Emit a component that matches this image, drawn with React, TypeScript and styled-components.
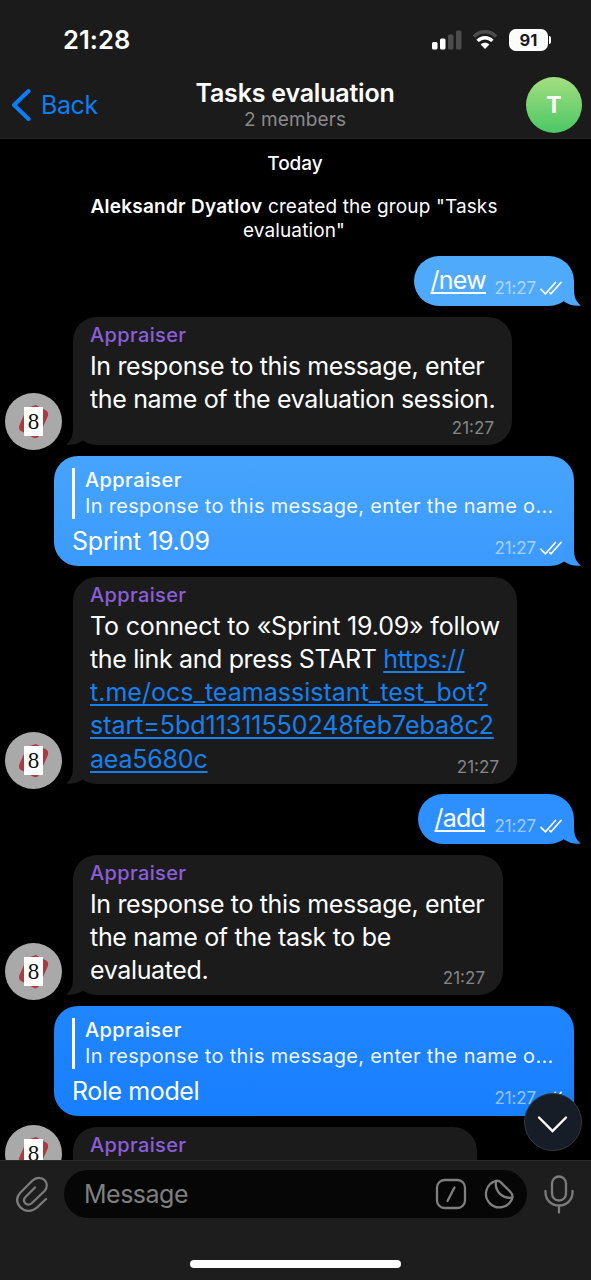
import React from 'react';
import styled, { createGlobalStyle } from 'styled-components';

const GlobalStyle = createGlobalStyle`
  * { box-sizing: border-box; }
  body {
    margin: 0;
    background: #000;
    font-family: Inter, "Liberation Sans", sans-serif;
    color: #fff;
    -webkit-font-smoothing: antialiased;
  }
`;

const Screen = styled.main`
  width: 591px;
  height: 1280px;
  display: flex;
  flex-direction: column;
  overflow: hidden;
  background: #000;
`;

const Header = styled.header`
  flex: none;
  height: 139px;
  background: #1b1b1b;
  border-bottom: 1px solid #262626;
`;

const StatusBar = styled.div`
  height: 77px;
  padding: 2px 40px 0 63px;
  display: flex;
  align-items: center;
  justify-content: space-between;
`;

const Clock = styled.span`
  font-size: 25.5px;
  font-weight: 600;
  letter-spacing: 0.1px;
`;

const StatusIcons = styled.div`
  display: flex;
  align-items: center;
  svg { display: block; }
`;

const WifiIcon = styled.svg`
  margin-left: 10px;
`;

const Battery = styled.div`
  display: flex;
  align-items: center;
  margin-left: 11px;
`;

const BatteryLevel = styled.span`
  width: 39px;
  height: 22px;
  border-radius: 7px;
  background: #fff;
  color: #1b1b1b;
  font-size: 16.5px;
  line-height: 22px;
  font-weight: 700;
  text-align: center;
`;

const BatteryTip = styled.span`
  width: 2px;
  height: 8px;
  margin-left: 1px;
  border-radius: 0 3px 3px 0;
  background: #fff;
`;

const NavBar = styled.nav`
  height: 61px;
  display: grid;
  grid-template-columns: 150px 1fr 150px;
  padding: 0 9px 0 11px;
`;

const BackButton = styled.div`
  display: flex;
  align-items: center;
  gap: 10px;
  height: 56px;
  color: #0a80f8;
  font-size: 25px;
  letter-spacing: -0.4px;
`;

const TitleBlock = styled.div`
  text-align: center;
  padding: 1px 3px 0 0;
`;

const Title = styled.div`
  font-size: 25px;
  line-height: 30px;
  font-weight: 600;
  letter-spacing: -0.2px;
  white-space: nowrap;
`;

const Subtitle = styled.div`
  font-size: 19px;
  line-height: 24px;
  letter-spacing: 0.1px;
  color: #8a8a8c;
`;

const GroupAvatar = styled.div`
  justify-self: end;
  width: 56px;
  height: 56px;
  border-radius: 50%;
  background: linear-gradient(#a3df80, #4cc764);
  font-size: 23px;
  line-height: 57px;
  font-weight: 700;
  text-align: center;
`;

const Conversation = styled.section`
  flex: 1;
  min-height: 0;
  overflow: hidden;
  display: flex;
  flex-direction: column;
`;

const DayLabel = styled.div`
  flex: none;
  height: 49px;
  padding-right: 1px;
  line-height: 50px;
  text-align: center;
  font-size: 19px;
  font-weight: 500;
`;

const ServiceNote = styled.p`
  flex: none;
  width: 588px;
  height: 61px;
  margin: 7px 0 0;
  font-size: 19px;
  line-height: 24px;
  letter-spacing: 0.13px;
  text-align: center;
  b {
    font-weight: 600;
    letter-spacing: 0.25px;
  }
`;

const Feed = styled.div`
  flex: none;
  display: flex;
  flex-direction: column;
  gap: 10.5px;
`;

const IncomingRow = styled.div`
  display: flex;
  align-items: flex-end;
  gap: 11px;
  padding-left: 5px;
`;

const OutgoingRow = styled.div`
  display: flex;
  justify-content: flex-end;
  padding-right: 17px;
`;

const BotAvatar = styled.div<{ $pinned?: boolean }>`
  flex: none;
  width: 57px;
  height: 57px;
  margin-bottom: -5px;
  border-radius: 50%;
  background: #a9a9a9;
  overflow: hidden;
  align-self: ${p => (p.$pinned ? 'flex-start' : 'flex-end')};
  margin-top: ${p => (p.$pinned ? '-1.5px' : '0')};
  svg { display: block; }
`;

const IncomingBubble = styled.div<{ $width: number; $height: number }>`
  position: relative;
  display: grid;
  grid-template-columns: minmax(0, 1fr);
  width: ${p => p.$width}px;
  height: ${p => p.$height}px;
  padding: 5px 18px 6px 17px;
  border-radius: 24px;
  background: #1b1b1b;
`;

const Tail = styled.svg<{ $side: 'left' | 'right' }>`
  position: absolute;
  bottom: 0;
  width: 21px;
  height: 24px;
  ${p => (p.$side === 'left' ? 'left: -7px; transform: scaleX(-1);' : 'right: -7px;')}
`;

const MessageBody = styled.div`
  grid-area: 1 / 1;
  white-space: nowrap;
`;

const Sender = styled.div`
  height: 28px;
  font-size: 20px;
  line-height: 27px;
  font-weight: 500;
  letter-spacing: 0.35px;
  color: #8b5fd9;
`;

const Line = styled.div<{ $tracking?: number }>`
  font-size: 25px;
  line-height: 33.3px;
  letter-spacing: ${p => p.$tracking ?? -0.36}px;
`;

const Link = styled.a`
  color: #1580f0;
  text-decoration: underline;
  text-decoration-thickness: 1.5px;
  text-underline-offset: 3px;
  text-decoration-skip-ink: none;
`;

const Time = styled.time`
  grid-area: 1 / 1;
  align-self: end;
  justify-self: end;
  font-size: 17px;
  line-height: 22px;
  color: #858587;
`;

const CommandBubble = styled.div<{ $width: number; $fill: string }>`
  position: relative;
  display: flex;
  justify-content: space-between;
  width: ${p => p.$width}px;
  height: 50px;
  padding: 0 12px 0 16.5px;
  border-radius: 25px;
  background: ${p => p.$fill};
`;

const Command = styled.span`
  font-size: 25px;
  line-height: 49px;
  letter-spacing: -0.75px;
  text-decoration: underline;
  text-decoration-thickness: 1.5px;
  text-underline-offset: 3px;
  text-decoration-skip-ink: none;
`;

const Receipt = styled.div`
  align-self: flex-end;
  display: flex;
  align-items: center;
  gap: 4px;
  height: 22px;
  margin-bottom: 7px;
  font-size: 17px;
  letter-spacing: -0.15px;
  color: rgba(255, 255, 255, 0.55);
`;

const ReplyBubble = styled.div<{ $from: string; $to: string }>`
  position: relative;
  display: flex;
  flex-direction: column;
  width: 520px;
  height: 110.5px;
  padding: 12px 12px 0 18px;
  border-radius: 24px;
  background: linear-gradient(${p => p.$from}, ${p => p.$to});
`;

const Quote = styled.div`
  flex: none;
  height: 51px;
  padding-left: 10px;
  border-left: 3px solid #fff;
  font-size: 20px;
  line-height: 26px;
  white-space: nowrap;
`;

const QuoteName = styled.div`
  font-weight: 500;
  line-height: 25px;
  letter-spacing: 0.4px;
`;

const QuoteText = styled.div`
  letter-spacing: 0.31px;
  color: rgba(255, 255, 255, 0.95);
`;

const ReplyFooter = styled.div`
  flex: 1;
  display: flex;
  justify-content: space-between;
  padding-top: 6px;
`;

const Dock = styled.footer`
  position: relative;
  flex: none;
  height: 120px;
  border-top: 1px solid #2b2b2b;
  background: #1d1d1d;
`;

const Composer = styled.div`
  display: flex;
  align-items: center;
  padding: 9px 16px 0 15px;
  svg { display: block; flex: none; }
`;

const Field = styled.div`
  display: flex;
  align-items: center;
  width: 463px;
  height: 48px;
  margin: 0 16px 0 14px;
  padding: 0 11px 0 20px;
  border-radius: 25px;
  background: #060606;
  color: #7f7f80;
  font-size: 25px;
  letter-spacing: -0.5px;
  gap: 14px;
`;

const Placeholder = styled.span`
  flex: 1;
  padding-bottom: 1px;
`;

const HomeIndicator = styled.div`
  width: 211px;
  height: 8px;
  margin: 42px auto 0;
  border-radius: 4px;
  background: #fff;
`;

const ScrollDown = styled.div`
  position: absolute;
  right: 9px;
  top: -68px;
  width: 58px;
  height: 58px;
  border: 1px solid #33383f;
  border-radius: 50%;
  background: #171d26;
  svg { display: block; }
`;

function BubbleTail({ side, fill }: { side: 'left' | 'right'; fill: string }) {
  return (
    <Tail $side={side} viewBox="0 0 21 24">
      <path d="M6 0H14V6C14 14 15 18.500 20.800 23.600C15 24.300 8.500 22.800 4 19.500Z" fill={fill} />
    </Tail>
  );
}

function Checks() {
  return (
    <svg width="22" height="15" viewBox="0 0 22 15" fill="none" stroke="#fff" strokeWidth="1.7" strokeLinecap="round" strokeLinejoin="round">
      <path d="M1 8.3L5.5 12.8L15.4 1.5" />
      <path d="M9.7 11.6L11 12.8L21 1.5" />
    </svg>
  );
}

function Bot({ pinned }: { pinned?: boolean }) {
  return (
    <BotAvatar $pinned={pinned}>
      <svg width="57" height="57" viewBox="0 0 57 57">
        <path d="M22 15L31 12L42 18Q44 20 42.500 24L34 43Q32 46 29 45L16 38Q13 36 14.500 32Z" fill="#a93b43" />
        <rect x="19" y="14" width="19" height="29" fill="#fff" />
        <text x="28.5" y="36" fontFamily="Liberation Serif, serif" fontSize="23" fill="#111" textAnchor="middle">8</text>
      </svg>
    </BotAvatar>
  );
}

interface IncomingProps {
  width: number;
  height: number;
  time?: string;
  pinned?: boolean;
  children?: React.ReactNode;
}

function Incoming({ width, height, time, pinned, children }: IncomingProps) {
  return (
    <IncomingRow>
      <Bot pinned={pinned} />
      <IncomingBubble $width={width} $height={height}>
        <BubbleTail side="left" fill="#1b1b1b" />
        <MessageBody>
          <Sender>Appraiser</Sender>
          {children}
        </MessageBody>
        {time && <Time>{time}</Time>}
      </IncomingBubble>
    </IncomingRow>
  );
}

function OutgoingCommand({ text, width, fill }: { text: string; width: number; fill: string }) {
  return (
    <OutgoingRow>
      <CommandBubble $width={width} $fill={fill}>
        <BubbleTail side="right" fill={fill} />
        <Command>{text}</Command>
        <Receipt>21:27<Checks /></Receipt>
      </CommandBubble>
    </OutgoingRow>
  );
}

interface ReplyProps {
  text: string;
  tracking: number;
  from: string;
  to: string;
}

function OutgoingReply({ text, tracking, from, to }: ReplyProps) {
  return (
    <OutgoingRow>
      <ReplyBubble $from={from} $to={to}>
        <BubbleTail side="right" fill={to} />
        <Quote>
          <QuoteName>Appraiser</QuoteName>
          <QuoteText>In response to this message, enter the name o...</QuoteText>
        </Quote>
        <ReplyFooter>
          <Line $tracking={tracking}>{text}</Line>
          <Receipt>21:27<Checks /></Receipt>
        </ReplyFooter>
      </ReplyBubble>
    </OutgoingRow>
  );
}

export default function App() {
  return (
    <Screen>
      <GlobalStyle />
      <Header>
        <StatusBar>
          <Clock>21:28</Clock>
          <StatusIcons>
            <svg width="30" height="20" viewBox="0 0 30 20">
              <rect x="0" y="12" width="5.5" height="7.5" rx="1.5" fill="#fff" />
              <rect x="8" y="8.5" width="5.5" height="11" rx="1.5" fill="#fff" />
              <rect x="16" y="4.5" width="5.5" height="15" rx="1.5" fill="#4c4c4c" />
              <rect x="24" y="0.5" width="5.5" height="19" rx="1.5" fill="#4c4c4c" />
            </svg>
            <WifiIcon width="26" height="20" viewBox="0 0 26 20" fill="none">
              <path d="M1.8 6.6C8.2 0.2 17.8 0.2 24.2 6.6" stroke="#4c4c4c" strokeWidth="3.4" />
              <path d="M5.6 10.9C9.8 6.7 16.2 6.7 20.4 10.9" stroke="#fff" strokeWidth="3.4" />
              <path d="M8.6 14.6C11 12 15 12 17.4 14.6L13 19Z" fill="#fff" />
            </WifiIcon>
            <Battery>
              <BatteryLevel>91</BatteryLevel>
              <BatteryTip />
            </Battery>
          </StatusIcons>
        </StatusBar>
        <NavBar>
          <BackButton>
            <svg width="20" height="34" viewBox="0 0 20 34" fill="none" stroke="currentColor" strokeWidth="4" strokeLinecap="round" strokeLinejoin="round">
              <path d="M17.5 3L3 17L17.5 31" />
            </svg>
            Back
          </BackButton>
          <TitleBlock>
            <Title>Tasks evaluation</Title>
            <Subtitle>2 members</Subtitle>
          </TitleBlock>
          <GroupAvatar>T</GroupAvatar>
        </NavBar>
      </Header>

      <Conversation>
        <DayLabel>Today</DayLabel>
        <ServiceNote>
          <b>Aleksandr Dyatlov</b> created the group "Tasks<br />evaluation"
        </ServiceNote>
        <Feed>
          <OutgoingCommand text="/new" width={160} fill="#4faafb" />
          <Incoming width={439} height={128.5} time="21:27">
            <Line>In response to this message, enter</Line>
            <Line>the name of the evaluation session.</Line>
          </Incoming>
          <OutgoingReply text="Sprint 19.09" tracking={-0.18} from="#46a4fd" to="#3c9aff" />
          <Incoming width={444} height={207} time="21:27">
            <Line $tracking={-0.17}>To connect to «Sprint 19.09» follow</Line>
            <Line>the link and press START <Link>https://</Link></Line>
            <Line $tracking={0.02}><Link>t.me/ocs_teamassistant_test_bot?</Link></Line>
            <Line $tracking={-0.04}><Link>start=5bd11311550248feb7eba8c2</Link></Line>
            <Line $tracking={-0.2}><Link>aea5680c</Link></Line>
          </Incoming>
          <OutgoingCommand text="/add" width={156} fill="#2e8fff" />
          <Incoming width={430} height={140.5} time="21:27">
            <Line>In response to this message, enter</Line>
            <Line $tracking={-0.3}>the name of the task to be</Line>
            <Line>evaluated.</Line>
          </Incoming>
          <OutgoingReply text="Role model" tracking={-0.4} from="#2085ff" to="#187fff" />
          <Incoming width={404} height={128.5} pinned />
        </Feed>
      </Conversation>

      <Dock>
        <ScrollDown>
          <svg width="56" height="56" viewBox="0 0 56 56" fill="none" stroke="#fff" strokeWidth="2.4" strokeLinecap="round" strokeLinejoin="miter">
            <path d="M14 23.5L27.500 37L41 23.5" />
          </svg>
        </ScrollDown>
        <Composer>
          <svg width="35" height="38" viewBox="0 0 35 38" fill="none" stroke="#7c7c7e" strokeWidth="2.3" strokeLinecap="round" strokeLinejoin="round">
            <path d="M31 24L22 32.500C17 37 10 37 5.500 32.500C1 28 1 22 5.500 17.500L17.500 5.500C21 2 26.500 2 29.500 5C32.500 8 32.500 12.500 29.500 16L17 28C15 30 12 30 10.300 28.200C8.500 26.200 8.500 24 10.500 22L20 12.500" />
          </svg>
          <Field>
            <Placeholder>Message</Placeholder>
            <svg width="34" height="34" viewBox="0 0 34 34" fill="none" stroke="#7f7f80" strokeWidth="2.3" strokeLinecap="round">
              <rect x="3" y="3" width="28" height="28" rx="7.500" />
              <path d="M20.500 10.500L13.500 24" />
            </svg>
            <svg width="34" height="34" viewBox="0 0 34 34" fill="none" stroke="#7f7f80" strokeWidth="2.300" strokeLinecap="round" strokeLinejoin="round">
              <path d="M14 3.800A13.500 13.500 0 1 0 30.500 20.500C30.800 18 30 16.500 28.500 15L19 5.500C17.500 4 16 3.500 14 3.800Z" />
              <path d="M14 4C12.500 13.500 19.500 22 30 20.700" />
            </svg>
          </Field>
          <svg width="32" height="40" viewBox="0 0 32 40" fill="none" stroke="#7c7c7e" strokeWidth="2.300" strokeLinecap="round">
            <rect x="9" y="2.500" width="14" height="24" rx="7" />
            <path d="M2.500 17V18.500C2.500 26 8.500 31.500 16 31.500S29.500 26 29.500 18.500V17M16 31.500V38.500" />
          </svg>
        </Composer>
        <HomeIndicator />
      </Dock>
    </Screen>
  );
}
